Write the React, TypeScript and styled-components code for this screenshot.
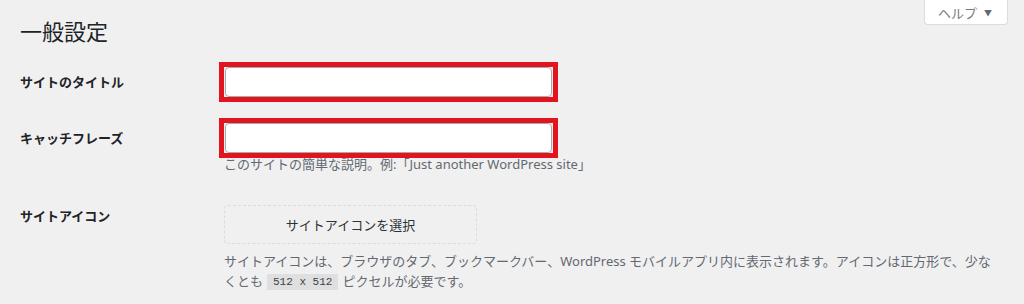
import styled, { createGlobalStyle } from 'styled-components';

const GlobalStyle = createGlobalStyle`
  body {
    margin: 0;
    background: #f0f0f1;
    color: #3c434a;
    font-family: "Noto Sans", "Noto Sans CJK JP", sans-serif;
    font-size: 13px;
  }
`;

const Page = styled.div`
  padding: 0 16px 0 20px;
`;

const Header = styled.div`
  display: flex;
  justify-content: space-between;
  align-items: flex-start;
  height: 62px;
`;

const Title = styled.h1`
  margin: 17px 0 0;
  font-size: 22px;
  font-weight: 400;
  line-height: 28px;
  color: #1d2327;
`;

const HelpButton = styled.button`
  display: flex;
  align-items: center;
  gap: 7px;
  height: 25px;
  padding: 0 15px 0 13px;
  background: #fff;
  border: 1px solid #dcdcde;
  border-top: none;
  border-radius: 0 0 4px 4px;
  color: #787c82;
  font-family: inherit;
  font-size: 13px;
`;

const Caret = styled.span`
  font-size: 8px;
  color: #646970;
`;

const Row = styled.div<{ $gap: number }>`
  display: grid;
  grid-template-columns: 199px 1fr;
  margin-bottom: ${({ $gap }) => $gap}px;
`;

const Label = styled.label<{ $top: number }>`
  padding-top: ${({ $top }) => $top}px;
  font-weight: 700;
  line-height: 18px;
  color: #1d2327;
`;

const Field = styled.div`
  display: flex;
  flex-direction: column;
  align-items: flex-start;
`;

const Highlight = styled.div`
  border: 5px solid #e2151f;
  padding: 0 1px;
`;

const TextInput = styled.input`
  display: block;
  box-sizing: border-box;
  width: 327px;
  height: 30px;
  margin: 0;
  background: #fff;
  border: 1px solid #a7aaad;
  border-radius: 4px;
`;

const Description = styled.p<{ $top: number }>`
  max-width: 772px;
  margin: ${({ $top }) => $top}px 0 0 5px;
  line-height: 20px;
  color: #646970;
`;

const UploadButton = styled.button`
  box-sizing: border-box;
  width: 253px;
  height: 39px;
  margin-left: 5px;
  background: #f0f0f1;
  border: 1px dashed #dcdcde;
  border-radius: 4px;
  color: #2c3338;
  font-family: inherit;
  font-size: 13px;
`;

const Code = styled.code`
  display: inline-block;
  padding: 0 6px;
  margin: 0 4px;
  background: rgba(0, 0, 0, 0.07);
  font-family: "Liberation Mono", monospace;
  font-size: 11px;
  line-height: 16px;
  vertical-align: 1px;
  color: #3c434a;
`;

export default function App() {
  return (
    <Page>
      <GlobalStyle />
      <Header>
        <Title>一般設定</Title>
        <HelpButton>
          ヘルプ <Caret>▼</Caret>
        </HelpButton>
      </Header>

      <Row $gap={16}>
        <Label $top={11}>サイトのタイトル</Label>
        <Field>
          <Highlight>
            <TextInput type="text" />
          </Highlight>
        </Field>
      </Row>

      <Row $gap={31}>
        <Label $top={11}>キャッチフレーズ</Label>
        <Field>
          <Highlight>
            <TextInput type="text" />
          </Highlight>
          <Description $top={-4}>
            このサイトの簡単な説明。例:「Just another WordPress site」
          </Description>
        </Field>
      </Row>

      <Row $gap={0}>
        <Label $top={2}>サイトアイコン</Label>
        <Field>
          <UploadButton>サイトアイコンを選択</UploadButton>
          <Description $top={7}>
            サイトアイコンは、ブラウザのタブ、ブックマークバー、WordPress モバイルアプリ内に表示されます。アイコンは正方形で、少なくとも
            <Code>512 x 512</Code>
            ピクセルが必要です。
          </Description>
        </Field>
      </Row>
    </Page>
  );
}
